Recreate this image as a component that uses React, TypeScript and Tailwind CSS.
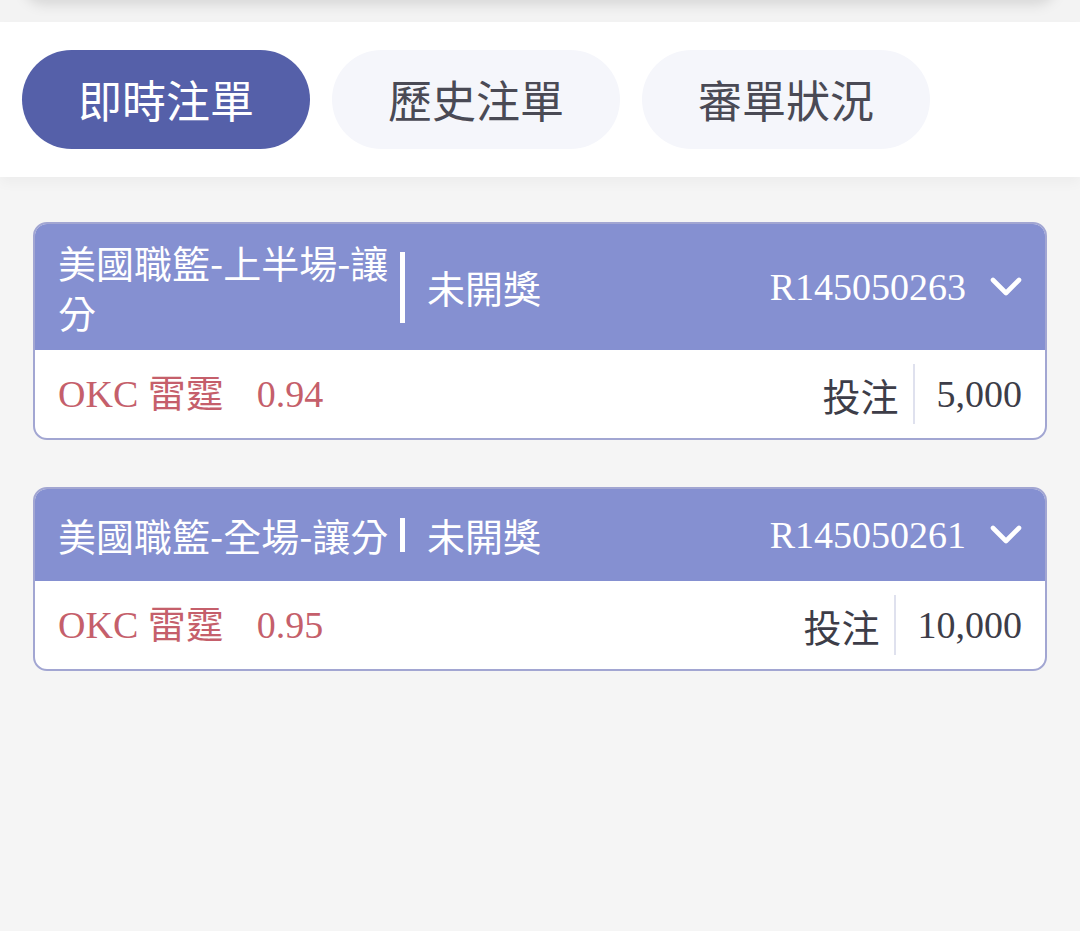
type Bet = {
  title: string
  status: string
  id: string
  team: string
  odds: string
  amount: string
  divider: string
}

const bets: Bet[] = [
  { title: '美國職籃-上半場-讓分', status: '未開獎', id: 'R145050263', team: '雷霆', odds: '0.94', amount: '5,000', divider: 'h-[71px]' },
  { title: '美國職籃-全場-讓分', status: '未開獎', id: 'R145050261', team: '雷霆', odds: '0.95', amount: '10,000', divider: 'h-[34px]' },
]

const tabs = ['即時注單', '歷史注單', '審單狀況']

function Chevron() {
  return (
    <svg width="34" height="22" viewBox="0 0 34 22" fill="none" className="shrink-0">
      <polyline points="4,4 17,17 30,4" stroke="white" strokeWidth="4.6" strokeLinecap="round" strokeLinejoin="round" />
    </svg>
  )
}

function BetCard({ bet }: { bet: Bet }) {
  return (
    <div className="rounded-[14px] border-2 border-[#a2a6d2] overflow-hidden bg-white">
      <div className="flex items-center bg-[#8590d1] text-white pl-[23px] pr-[22px] py-[13px] min-h-[92px]">
        <div className="w-[339px] shrink-0 text-[38px] leading-[50px] font-['Noto_Sans_CJK_TC',sans-serif]">
          {bet.title}
        </div>
        <div className={`w-[5px] shrink-0 bg-white ml-[3px] ${bet.divider}`} />
        <div className="ml-[22px] text-[38px] leading-[50px] font-['Noto_Sans_CJK_TC',sans-serif]">
          {bet.status}
        </div>
        <div className="ml-auto flex items-center gap-[23px]">
          <span className="text-[38px] font-['Liberation_Serif',serif]">{bet.id}</span>
          <Chevron />
        </div>
      </div>
      <div className="flex items-center h-[88px] px-[23px] text-[38px] font-['Liberation_Serif','Noto_Sans_CJK_TC',serif]">
        <span className="text-[#c55f6b]">OKC {bet.team}</span>
        <span className="text-[#c55f6b] ml-[33px]">{bet.odds}</span>
        <span className="ml-auto text-[#3d3d48] font-['Noto_Sans_CJK_TC',sans-serif]">投注</span>
        <div className="w-[2px] h-[60px] bg-[#dfe1ee] mx-[14px]" />
        <span className="text-[#3d3d48] ml-[8px]">{bet.amount}</span>
      </div>
    </div>
  )
}

export default function App() {
  return (
    <div className="min-h-[931px] bg-[#f5f5f5]">
      <div className="h-[22px] overflow-hidden bg-[#f3f3f3]">
        <div className="-mt-[20px] h-[20px] mx-[24px] rounded-b-[24px] bg-[#f3f3f3] shadow-[0_4px_14px_rgba(0,0,0,0.13)]" />
      </div>
      <div className="bg-white flex gap-[22px] px-[22px] pt-[28px] pb-[28px] shadow-[0_6px_12px_rgba(0,0,0,0.035)]">
        {tabs.map((t, i) => (
          <div
            key={t}
            className={
              i === 0
                ? 'w-[288px] h-[99px] rounded-full bg-[#5560a9] text-white flex items-center justify-center pb-[2px] text-[44px] font-["Noto_Sans_CJK_TC",sans-serif]'
                : 'w-[288px] h-[99px] rounded-full bg-[#f5f6fb] text-[#4a4a55] flex items-center justify-center pb-[2px] text-[44px] font-["Noto_Sans_CJK_TC",sans-serif]'
            }
          >
            {t}
          </div>
        ))}
      </div>
      <div className="flex flex-col gap-[47px] mx-[33px] mt-[45px]">
        {bets.map(b => (
          <BetCard key={b.id} bet={b} />
        ))}
      </div>
    </div>
  )
}
